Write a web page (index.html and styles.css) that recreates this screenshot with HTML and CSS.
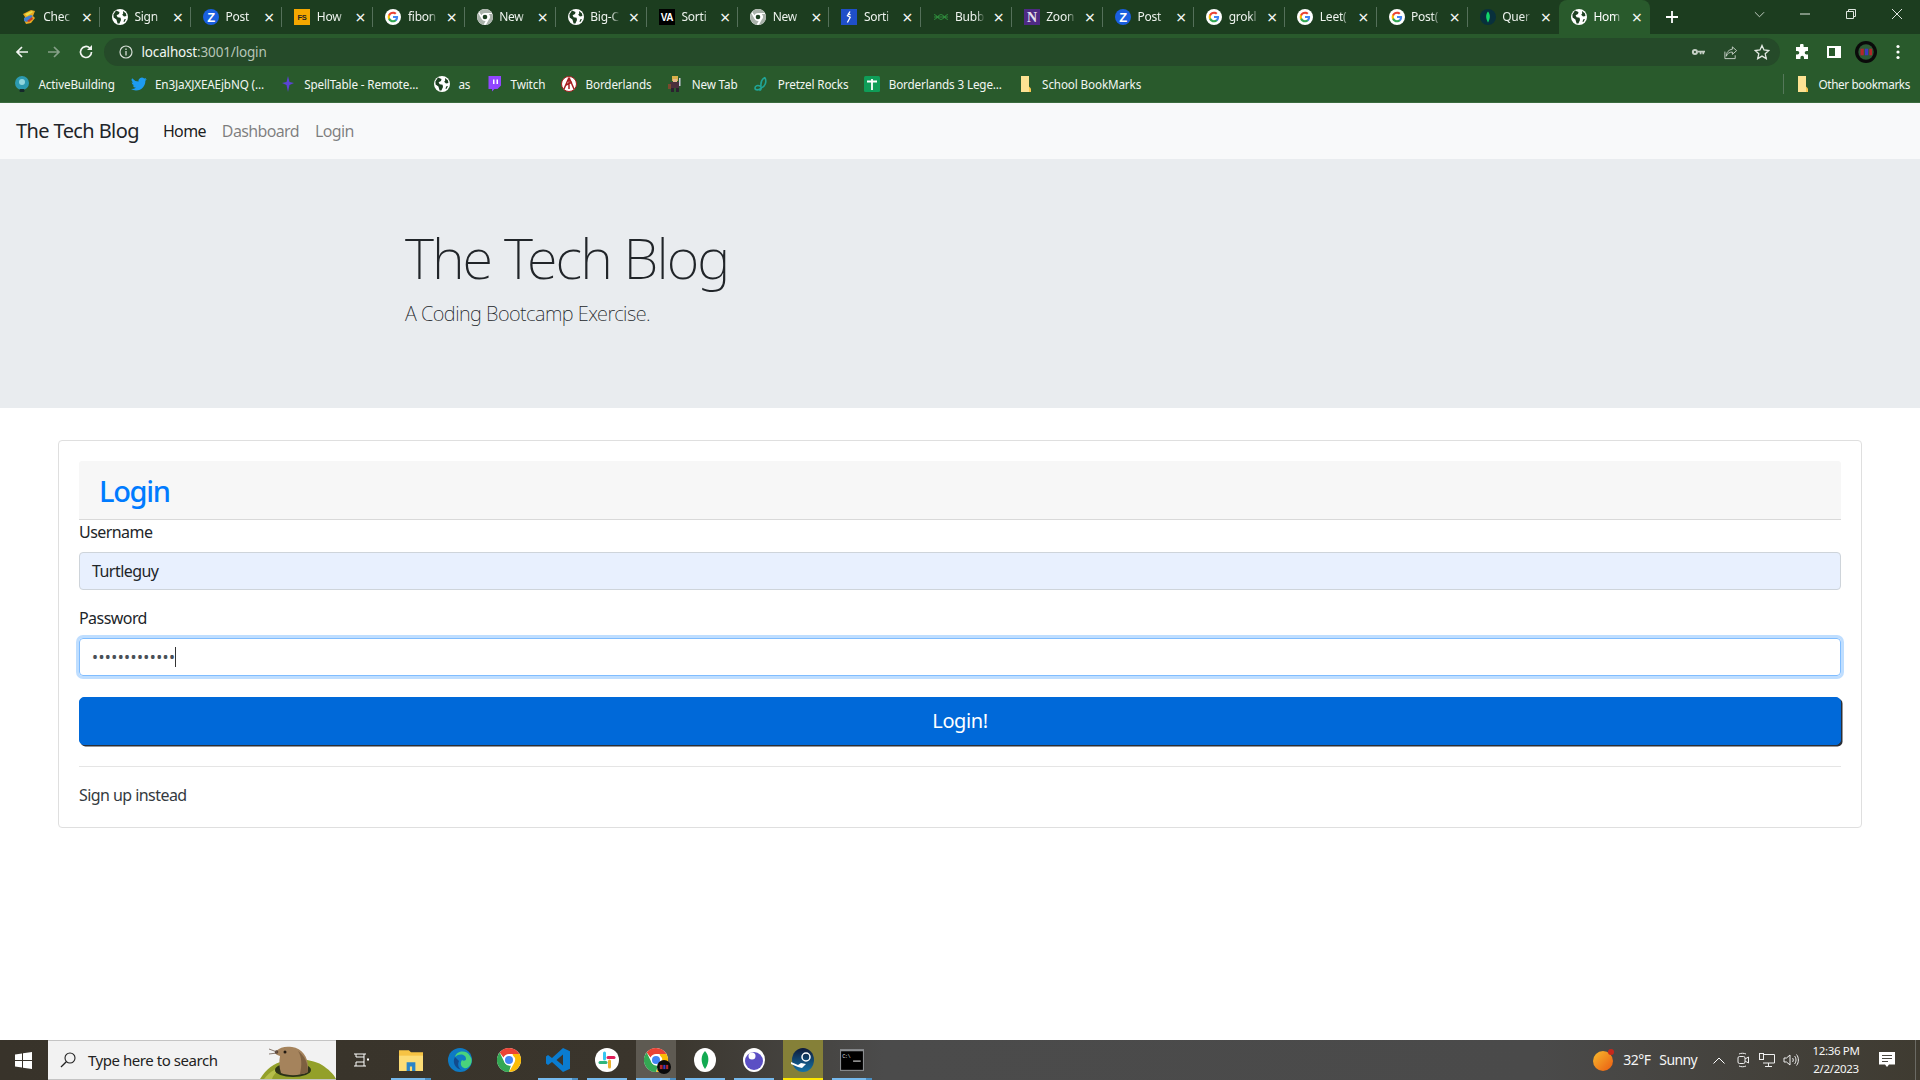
FILE: index.html
```html
<!DOCTYPE html>
<html lang="en">
<head>
<meta charset="utf-8">
<title>The Tech Blog</title>
<link rel="stylesheet" href="styles.css">
</head>
<body>
<svg class="defs" aria-hidden="true">
  <symbol id="globe" viewBox="0 0 16 16"><circle cx="8" cy="8" r="8" fill="#fff"/><path d="M4 1.600 7.500 3 7 5 4.600 6.200 5.600 8.200 8.600 8.800 9 11 7.400 14.600 5.600 14.400 4.400 10.600 1.600 8.400 1.400 5.400Z M11 2 14 4.600 14.400 7 12 7.600 10.200 5.800 11.200 4.400Z M12.600 10 14 10.200 12.400 13 11.400 12.600Z" fill="#1d3f21"/></symbol>
  <symbol id="g" viewBox="0 0 24 24"><circle cx="12" cy="12" r="12" fill="#fff"/><g transform="translate(3.3 3.3) scale(.725)"><path fill="#4285F4" d="M22.56 12.25c0-.78-.07-1.53-.2-2.25H12v4.26h5.92c-.26 1.37-1.04 2.53-2.21 3.31v2.77h3.57c2.08-1.92 3.28-4.74 3.28-8.09z"/><path fill="#34A853" d="M12 23c2.97 0 5.46-.98 7.28-2.66l-3.57-2.77c-.98.66-2.23 1.06-3.71 1.06-2.86 0-5.29-1.93-6.16-4.53H2.18v2.84C3.99 20.53 7.7 23 12 23z"/><path fill="#FBBC05" d="M5.84 14.09c-.22-.66-.35-1.36-.35-2.09s.13-1.43.35-2.09V7.07H2.18C1.43 8.55 1 10.22 1 12s.43 3.45 1.18 4.93l2.85-2.22.81-.62z"/><path fill="#EA4335" d="M12 5.38c1.62 0 3.06.56 4.21 1.64l3.15-3.15C17.45 2.09 14.97 1 12 1 7.7 1 3.99 3.47 2.18 7.07l3.66 2.84c.87-2.6 3.3-4.53 6.16-4.53z"/></g></symbol>
  <symbol id="chromegray" viewBox="0 0 16 16"><circle cx="8" cy="8" r="8" fill="#fff"/><path d="M8 0a8 8 0 0 1 7 4H8a4 4 0 0 0-3.600 2.200L2 2.800A8 8 0 0 1 8 0ZM1.200 4l3.400 6a4 4 0 0 0 4 2L6.600 15.800A8 8 0 0 1 1.200 4ZM15.400 5a8 8 0 0 1-6.600 11l3-5.500a4 4 0 0 0 0-5.500Z" fill="#aab3ab"/><circle cx="8" cy="8" r="3.300" fill="#fff"/><circle cx="8" cy="8" r="2.300" fill="#1d3f21"/></symbol>
  <symbol id="check" viewBox="0 0 16 16"><path d="M2 5 10 1l4 1-2 5 2 2-4 5-5 1-2-4 1-3Z" fill="#e9a820"/><path d="M3 9l7-3 2 1-6 6-3-1Z" fill="#3f7fd0"/><path d="M4 5l7-3 1 1-6 4Z" fill="#e8e04a"/><path d="M6 12l5-4 1 2-4 3Z" fill="#c4382c"/></symbol>
  <symbol id="blue" viewBox="0 0 16 16"><rect width="16" height="16" fill="#1f4fc9"/><path d="M9 2.500 6.400 6.800 9.200 8.200 6.400 13.500M6.800 4.600 9.600 6" stroke="#fff" stroke-width="1.300" fill="none"/></symbol>
  <symbol id="bubble" viewBox="0 0 16 16"><path d="M1 5.500c3 0 4 5 7 5s4-5 7-5M1 10.500c3 0 4-5 7-5s4 5 7 5M1 8h14" stroke="#2f8a3c" stroke-width="1.200" fill="none"/></symbol>
  <symbol id="mongotab" viewBox="0 0 16 16"><circle cx="8" cy="8" r="8" fill="#08303c"/><path d="M8 2.500c2.300 2.500 2.600 6.500 0 11-2.600-4.500-2.300-8.500 0-11Z" fill="#12d66a"/></symbol>
  <symbol id="active" viewBox="0 0 16 16"><circle cx="8" cy="7" r="7" fill="#2c9ab0"/><circle cx="8" cy="6" r="3" fill="#8fd6dd"/><rect x="5.500" y="13" width="5" height="3" rx="1" fill="#15282a"/></symbol>
  <symbol id="twitter" viewBox="0 0 24 24"><path fill="#1d9bf0" d="M23.600 4.600a9.700 9.700 0 0 1-2.800.8 4.900 4.900 0 0 0 2.100-2.700 9.800 9.800 0 0 1-3.100 1.200 4.900 4.900 0 0 0-8.400 4.500A13.900 13.900 0 0 1 1.700 3.200a4.900 4.900 0 0 0 1.500 6.600 4.900 4.900 0 0 1-2.200-.6v.1a4.900 4.900 0 0 0 3.900 4.800 4.900 4.900 0 0 1-2.200.1 4.900 4.900 0 0 0 4.600 3.400A9.900 9.900 0 0 1 0 19.600a13.900 13.900 0 0 0 7.500 2.200c9 0 14-7.500 14-14v-.6a10 10 0 0 0 2.100-2.600Z"/></symbol>
  <symbol id="spell" viewBox="0 0 16 16"><path d="M8 0 9.500 6 14 7 9.500 9 8 16 6.500 9 2 7 6.500 6Z" fill="#5b43d6"/></symbol>
  <symbol id="twitch" viewBox="0 0 16 16"><path d="M2.500 0H15v9.500L11.500 13H8.500L6 15.500V13H2.500Z" fill="#9146ff"/><path d="M7 3.500h1.500v4.500H7ZM10.500 3.500H12v4.500h-1.500Z" fill="#fff"/></symbol>
  <symbol id="bl" viewBox="0 0 16 16"><circle cx="8" cy="8" r="7.500" fill="#fff" stroke="#a81e22"/><path d="M8 1.500 3 13M8 1.500 13 13M8 1.500V13M5 9l6-3" stroke="#a81e22" stroke-width="1.500" fill="none"/></symbol>
  <symbol id="pixel" viewBox="0 0 16 16"><rect x="5" y="0" width="6" height="5" fill="#d9b04a"/><rect x="6" y="3" width="4" height="3" fill="#e6b990"/><rect x="3" y="6" width="9" height="6" fill="#4a2f3c"/><rect x="1" y="8" width="3" height="5" fill="#7a4a2e"/><rect x="12" y="2" width="1.500" height="8" fill="#ccd"/><rect x="4" y="12" width="3" height="4" fill="#2b2230"/><rect x="9" y="12" width="3" height="4" fill="#2b2230"/></symbol>
  <symbol id="pretzel" viewBox="0 0 16 16"><path d="M12 1.500C14 6 12 11 8 12 6 14.500 2 14.500 2 12s3-3 5-2c2 1 1.500 4-.5 4.500M12 1.500C9 3 7.500 6 8 10" stroke="#20a597" stroke-width="1.600" fill="none"/></symbol>
  <symbol id="sheet" viewBox="0 0 16 16"><rect width="16" height="16" rx="1.500" fill="#0f9d58"/><path d="M3 5.500h10M8 3v11" stroke="#fff" stroke-width="1.800"/></symbol>
  <symbol id="folder" viewBox="0 0 16 16"><path d="M3 0H11V14H13V16H3Z" fill="#fde293"/><path d="M11 10.500 13 12.500V16H11Z" fill="#f9c74f"/></symbol>
  <symbol id="chrome" viewBox="0 0 24 24"><circle cx="12" cy="12" r="12" fill="#fff"/><path d="M12 0a12 12 0 0 1 10.400 6H12a6 6 0 0 0-5.500 3.600L2.700 4.400A12 12 0 0 1 12 0Z" fill="#ea4335"/><path d="M22.400 6A12 12 0 0 1 12 24l5.200-9A6 6 0 0 0 16 7.500L15.500 6Z" fill="#fbbc05"/><path d="M12 24A12 12 0 0 1 2.700 4.400L7.800 15a6 6 0 0 0 6 2.700Z" fill="#34a853"/><circle cx="12" cy="12" r="5" fill="#fff"/><circle cx="12" cy="12" r="4" fill="#4285f4"/></symbol>
</svg>

<header class="chrome">
  <div class="tabstrip">
    <div class="tab"><svg class="fav"><use href="#check"/></svg><span class="tab-title">Chec</span><span class="tab-x">×</span></div>
    <div class="tab"><svg class="fav"><use href="#globe"/></svg><span class="tab-title">Sign</span><span class="tab-x">×</span></div>
    <div class="tab"><svg class="fav" viewBox="0 0 16 16"><circle cx="8" cy="8" r="8" fill="#1a5fe0"/><text x="8" y="12.500" text-anchor="middle" font-family="Liberation Sans" font-weight="700" font-size="13" fill="#fff">Z</text></svg><span class="tab-title">Post</span><span class="tab-x">×</span></div>
    <div class="tab"><svg class="fav" viewBox="0 0 16 16"><rect width="16" height="16" fill="#f5a800"/><text x="8" y="11" text-anchor="middle" font-family="Liberation Sans" font-weight="700" font-size="7.500" fill="#222">FS</text></svg><span class="tab-title">How</span><span class="tab-x">×</span></div>
    <div class="tab"><svg class="fav"><use href="#g"/></svg><span class="tab-title">fibon</span><span class="tab-x">×</span></div>
    <div class="tab"><svg class="fav"><use href="#chromegray"/></svg><span class="tab-title">New</span><span class="tab-x">×</span></div>
    <div class="tab"><svg class="fav"><use href="#globe"/></svg><span class="tab-title">Big-C</span><span class="tab-x">×</span></div>
    <div class="tab"><svg class="fav" viewBox="0 0 16 16"><rect width="16" height="16" fill="#000"/><text x="8" y="12" text-anchor="middle" font-family="Liberation Sans" font-weight="700" font-size="10" fill="#fff">VA</text></svg><span class="tab-title">Sorti</span><span class="tab-x">×</span></div>
    <div class="tab"><svg class="fav"><use href="#chromegray"/></svg><span class="tab-title">New</span><span class="tab-x">×</span></div>
    <div class="tab"><svg class="fav"><use href="#blue"/></svg><span class="tab-title">Sorti</span><span class="tab-x">×</span></div>
    <div class="tab"><svg class="fav"><use href="#bubble"/></svg><span class="tab-title">Bubb</span><span class="tab-x">×</span></div>
    <div class="tab"><svg class="fav" viewBox="0 0 16 16"><rect width="16" height="16" fill="#4e2a84"/><text x="8" y="13" text-anchor="middle" font-family="Liberation Serif" font-weight="700" font-size="14" fill="#e4e0ee">N</text></svg><span class="tab-title">Zoon</span><span class="tab-x">×</span></div>
    <div class="tab"><svg class="fav" viewBox="0 0 16 16"><circle cx="8" cy="8" r="8" fill="#1a5fe0"/><text x="8" y="12.500" text-anchor="middle" font-family="Liberation Sans" font-weight="700" font-size="13" fill="#fff">Z</text></svg><span class="tab-title">Post</span><span class="tab-x">×</span></div>
    <div class="tab"><svg class="fav"><use href="#g"/></svg><span class="tab-title">grokl</span><span class="tab-x">×</span></div>
    <div class="tab"><svg class="fav"><use href="#g"/></svg><span class="tab-title">Leet(</span><span class="tab-x">×</span></div>
    <div class="tab"><svg class="fav"><use href="#g"/></svg><span class="tab-title">Post(</span><span class="tab-x">×</span></div>
    <div class="tab tab-before-active"><svg class="fav"><use href="#mongotab"/></svg><span class="tab-title">Quer</span><span class="tab-x">×</span></div>
    <div class="tab tab-active"><svg class="fav"><use href="#globe"/></svg><span class="tab-title">Hom</span><span class="tab-x">×</span></div>
    <div class="tab-new"><svg viewBox="0 0 12 12"><path d="M6 0v12M0 6h12" stroke="#fff" stroke-width="1.800"/></svg></div>
    <div class="win-controls">
      <svg class="win-chev" viewBox="0 0 12 7"><path d="M1 1l5 5 5-5" stroke="#cfd8cf" fill="none"/></svg>
      <svg class="win-min" viewBox="0 0 10 10"><path d="M0 5h10" stroke="#dfe6df"/></svg>
      <svg class="win-max" viewBox="0 0 10 10"><path d="M.5 2.500h7v7h-7zM2.500 2.500v-2h7v7h-2" stroke="#dfe6df" fill="none"/></svg>
      <svg class="win-close" viewBox="0 0 10 10"><path d="M0 0l10 10M10 0 0 10" stroke="#dfe6df"/></svg>
    </div>
  </div>
  <div class="toolbar">
    <svg class="tb-btn" viewBox="0 0 16 16"><path d="M14 8H3M8 3 3 8l5 5" stroke="#f1f5f1" stroke-width="1.700" fill="none"/></svg>
    <svg class="tb-btn tb-fwd" viewBox="0 0 16 16"><path d="M2 8h11M8 3l5 5-5 5" stroke="#86a088" stroke-width="1.700" fill="none"/></svg>
    <svg class="tb-btn" viewBox="0 0 16 16"><path d="M13.500 8A5.500 5.500 0 1 1 11.800 4" stroke="#f1f5f1" stroke-width="1.700" fill="none"/><path d="M14 1v5H9Z" fill="#f1f5f1"/></svg>
    <div class="omnibox">
      <svg class="omni-info" viewBox="0 0 14 14"><circle cx="7" cy="7" r="6" stroke="#d5ddd5" stroke-width="1.200" fill="none"/><path d="M7 6v4.500M7 3.500v1.400" stroke="#d5ddd5" stroke-width="1.300"/></svg>
      <span class="url"><span class="url-host">localhost</span>:3001/login</span>
      <svg class="omni-key" viewBox="0 0 16 16"><circle cx="4.500" cy="8" r="3.500" fill="#c6d0c6"/><circle cx="4.500" cy="8" r="1.200" fill="#254a29"/><path d="M8 6.500h8v2h-1v2h-2v-2h-1v2h-2v-2H8Z" fill="#c6d0c6"/></svg>
      <svg class="omni-share" viewBox="0 0 16 16"><path d="M10 2l4.500 4-4.500 4V7.500C7 7.500 4.500 9 3.500 12 3.500 8 6 5 10 4.500ZM2 7v7.500h11V11" stroke="#c6d0c6" fill="none"/></svg>
      <svg class="omni-star" viewBox="0 0 16 16"><path d="M8 1.500 10 6l4.800.5L11.200 9.800 12.300 14.600 8 12.100 3.700 14.600 4.800 9.800 1.200 6.500 6 6Z" stroke="#e4eae4" stroke-width="1.300" fill="none"/></svg>
    </div>
    <div class="tb-right">
      <svg class="tb-icon" viewBox="0 0 16 16"><path d="M6 1.500a1.800 1.800 0 0 1 3.600 0V3H14v4h-1.500a1.800 1.800 0 0 0 0 3.600H14V15H10v-1.500a1.800 1.800 0 0 0-3.600 0V15H2v-4.400h1.500a1.800 1.800 0 0 0 0-3.600H2V3h4Z" fill="#fff"/></svg>
      <svg class="tb-icon" viewBox="0 0 16 16"><path d="M1 2h14v12H1Zm2 2v8h6V4Z" fill="#fff" fill-rule="evenodd"/></svg>
      <svg class="tb-avatar" viewBox="0 0 20 20"><circle cx="10" cy="10" r="10" fill="#0a0a0a"/><circle cx="10" cy="10" r="7" fill="#2d5a34"/><rect x="5" y="7" width="3" height="6" fill="#b3262a"/><rect x="9" y="7" width="3" height="6" fill="#3a3ac0"/><rect x="13" y="7" width="2.500" height="6" fill="#b3262a"/></svg>
      <svg class="tb-dots" viewBox="0 0 4 16"><circle cx="2" cy="2.500" r="1.600" fill="#fff"/><circle cx="2" cy="8" r="1.600" fill="#fff"/><circle cx="2" cy="13.500" r="1.600" fill="#fff"/></svg>
    </div>
  </div>
  <div class="bookmarks">
    <a class="bm"><svg class="fav"><use href="#active"/></svg>ActiveBuilding</a>
    <a class="bm"><svg class="fav"><use href="#twitter"/></svg>En3JaXJXEAEjbNQ (...</a>
    <a class="bm"><svg class="fav"><use href="#spell"/></svg>SpellTable - Remote...</a>
    <a class="bm"><svg class="fav"><use href="#globe"/></svg>as</a>
    <a class="bm"><svg class="fav"><use href="#twitch"/></svg>Twitch</a>
    <a class="bm"><svg class="fav"><use href="#bl"/></svg>Borderlands</a>
    <a class="bm"><svg class="fav"><use href="#pixel"/></svg>New Tab</a>
    <a class="bm"><svg class="fav"><use href="#pretzel"/></svg>Pretzel Rocks</a>
    <a class="bm"><svg class="fav"><use href="#sheet"/></svg>Borderlands 3 Lege...</a>
    <a class="bm"><svg class="fav"><use href="#folder"/></svg>School BookMarks</a>
    <span class="bm-sep"></span>
    <a class="bm bm-other"><svg class="fav"><use href="#folder"/></svg>Other bookmarks</a>
  </div>
</header>

<nav class="navbar">
  <a class="brand">The Tech Blog</a>
  <a class="nav-link nav-active">Home</a>
  <a class="nav-link">Dashboard</a>
  <a class="nav-link">Login</a>
</nav>

<section class="jumbotron">
  <div class="container">
    <h1 class="display">The Tech Blog</h1>
    <p class="lead">A Coding Bootcamp Exercise.</p>
  </div>
</section>

<main class="main">
  <div class="card">
    <h2 class="card-header">Login</h2>
    <label class="label">Username</label>
    <div class="control control-filled">Turtleguy</div>
    <label class="label">Password</label>
    <div class="control control-focus"><span class="dots">•••••••••••••</span><span class="caret"></span></div>
    <button class="btn">Login!</button>
    <hr class="rule">
    <p class="signup">Sign up instead</p>
  </div>
</main>

<footer class="taskbar">
  <svg class="start" viewBox="0 0 17 17"><path d="M0 2.400 7 1.400V8H0ZM8 1.300 17 0V8H8ZM0 9h7v6.600L0 14.600ZM8 9h9v8L8 15.700Z" fill="#fff"/></svg>
  <div class="search">
    <svg class="search-icon" viewBox="0 0 16 16"><circle cx="10" cy="6" r="5" stroke="#222" stroke-width="1.100" fill="none"/><path d="M6.300 9.700 1 15" stroke="#222" stroke-width="1.300"/></svg>
    <span class="search-text">Type here to search</span>
    <svg class="gopher" viewBox="0 0 76 40"><path d="M0 40C6 30 14 24 24 22 34 19 52 20 62 26 68 30 74 35 76 40Z" fill="#93a02a"/><path d="M4 40C10 32 18 28 28 26 20 30 14 34 12 40Z" fill="#b6bf4a"/><ellipse cx="33" cy="31" rx="18" ry="7" fill="#2c3318"/><path d="M21 34C19 28 19 22 20 17 16 16 14 14 16 12 20 8 26 7 32 8 42 9 48 18 48 28V33C40 37 28 37 21 34Z" fill="#a5835c"/><path d="M38 12C45 17 48 24 48 33 44 35 42 35 40 35 42 26 42 18 38 12Z" fill="#7d6040"/><circle cx="25" cy="13" r="1.500" fill="#221a12"/><circle cx="16.500" cy="13" r="1.800" fill="#5b4436"/><path d="M17 13 9 10M17 14 9 15" stroke="#6b5b4f" stroke-width=".8"/></svg>
  </div>
  <div class="tasks">
    <div class="task task-view"><svg viewBox="0 0 16 16"><path d="M1 2h12M3 2v3M11 2v3M1 14h12M3 14v-4h8v4M3 5h8v5" stroke="#fff" fill="none"/><rect x="14" y="6.500" width="2" height="2" fill="#fff"/></svg></div>
    <div class="task task-on task-multi"><svg class="task-wide" viewBox="0 0 22 20"><path d="M0 1h9l2 2h11v17H0Z" fill="#f6c344"/><path d="M0 6h22v14H0Z" fill="#fcdc76"/><path d="M7 20v-8h8v8h-3v-4h-2v4Z" fill="#2a84c8"/></svg></div>
    <div class="task"><svg class="task-wide" viewBox="0 0 24 24"><circle cx="12" cy="12" r="12" fill="#0e7ac4"/><path d="M22 8C19 2 9 2 7 9c4-4 11-3 11 2 0 2-3 2-4 1-3 4 0 9 5 8 5-3 6-8 3-12Z" fill="#4ad27c"/><path d="M7 9c-3 5 0 12 7 13-3-1-5-5-3-9Z" fill="#124b8d"/></svg></div>
    <div class="task"><svg class="task-wide" viewBox="0 0 24 24"><use href="#chrome"/></svg></div>
    <div class="task task-on task-multi"><svg class="task-wide" viewBox="0 0 24 24"><path d="M17 0 24 3.200V20.800L17 24 6 14 2 17 0 15.600V8.400L2 7 6 10ZM17 6.500 10.500 12 17 17.500Z" fill="#0a7cd0" fill-rule="evenodd"/></svg></div>
    <div class="task task-on"><svg class="task-wide" viewBox="0 0 24 24"><circle cx="12" cy="12" r="12" fill="#fff"/><g stroke-width="3" stroke-linecap="round"><path d="M9.500 5v6" stroke="#36c5f0"/><path d="M5 14.500h6" stroke="#2eb67d"/><path d="M14.500 19v-6" stroke="#ecb22e"/><path d="M19 9.500h-6" stroke="#e01e5a"/></g></svg></div>
    <div class="task task-on task-active task-multi"><svg class="task-wide" viewBox="0 0 24 24"><use href="#chrome"/></svg><svg class="task-badge" viewBox="0 0 20 20"><circle cx="10" cy="10" r="10" fill="#0a0a0a"/><rect x="4" y="7" width="4" height="6" fill="#b3262a"/><rect x="9" y="7" width="3" height="6" fill="#3a3ac0"/><rect x="13" y="7" width="3" height="6" fill="#b3262a"/></svg></div>
    <div class="task task-on"><svg class="task-wide" viewBox="0 0 24 24"><ellipse cx="12" cy="12" rx="11" ry="12" fill="#fff"/><path d="M12 3c4 4 5 11 0 18-5-7-4-14 0-18Z" fill="#13aa52"/></svg></div>
    <div class="task task-on"><svg class="task-wide" viewBox="0 0 24 24"><ellipse cx="12" cy="12" rx="11" ry="12" fill="#fff"/><circle cx="12" cy="13" r="9" fill="#5b4fc4"/><circle cx="10" cy="8" r="3.500" fill="#fff"/></svg></div>
    <div class="task task-alert"><svg class="task-wide" viewBox="0 0 24 24"><defs><linearGradient id="steam" x1="0" y1="0" x2="0" y2="1"><stop offset="0" stop-color="#0e1a3a"/><stop offset="1" stop-color="#1573a8"/></linearGradient></defs><ellipse cx="12" cy="12" rx="11" ry="12" fill="url(#steam)"/><circle cx="15" cy="9" r="4" fill="none" stroke="#fff" stroke-width="1.500"/><path d="M0 14l7 3 3-2 5 1-4 4-4-1-7-3Z" fill="#fff"/></svg></div>
    <div class="task task-on task-multi"><svg class="task-wide" viewBox="0 0 22 20"><rect width="22" height="20" fill="#8a8d90"/><rect x="1" y="2" width="20" height="17" fill="#000"/><text x="2" y="8" font-family="Liberation Mono" font-size="5" fill="#ddd">C:\</text><path d="M12 11h7" stroke="#ddd"/></svg></div>
  </div>
  <div class="tray">
    <svg class="weather" viewBox="0 0 22 22"><defs><linearGradient id="sun" x1="0" y1="0" x2="1" y2="1"><stop offset="0" stop-color="#f8bb2c"/><stop offset="1" stop-color="#ea5a12"/></linearGradient></defs><circle cx="10" cy="12" r="10" fill="url(#sun)"/><circle cx="18" cy="3" r="3" fill="#c5281c"/></svg>
    <span class="temp">32°F</span><span class="sunny">Sunny</span>
    <svg class="tray-chev" viewBox="0 0 12 7"><path d="M.5 6.500 6 1l5.500 5.500" stroke="#fff" stroke-width="1" fill="none"/></svg>
    <svg class="tray-meet" viewBox="0 0 12 16"><rect x="1" y="4.500" width="7" height="7" rx="1.500" stroke="#eee" fill="none"/><path d="M8 7l3.500-2v6L8 9M2 2c2-1 5-1 7 0M2 14c2 1 5 1 7 0" stroke="#eee" fill="none"/></svg>
    <svg class="tray-net" viewBox="0 0 16 14"><path d="M4.500 1.500H15.500V10H4M9.500 10v3M6 13.500h7" stroke="#eee" fill="none"/><rect x=".5" y=".5" width="4" height="6" fill="#4a4842" stroke="#eee"/></svg>
    <svg class="tray-vol" viewBox="0 0 16 14"><path d="M1 5h2.500L7 2v10L3.500 9H1ZM9.500 5c1 1 1 3 0 4M11.500 3c2 2 2 6 0 8M13.500 1.500c2.500 3 2.500 8 0 11" stroke="#eee" fill="none"/></svg>
    <div class="clock"><span>12:36 PM</span><span>2/2/2023</span></div>
    <svg class="notif" viewBox="0 0 16 16"><path d="M0 0h16v12.500H10L8 15 6 12.500H0Z" fill="#fff"/><path d="M3 3.500h10M3 6.500h10M3 9.500h6" stroke="#4a4842"/></svg>
    <span class="show-desktop"></span>
  </div>
</footer>
</body>
</html>
```

FILE: styles.css
```css
* { box-sizing: border-box; }
html, body { height: 100%; }
body {
  margin: 0;
  display: flex;
  flex-direction: column;
  height: 1080px;
  overflow: hidden;
  background: #fff;
  color: #212529;
  font-family: "Noto Sans", "Liberation Sans", sans-serif;
  font-size: 16px;
  line-height: 24px;
  letter-spacing: -0.035em;
}
.defs { position: absolute; width: 0; height: 0; }

/* browser chrome */
.chrome { flex: none; height: 103px; display: flex; flex-direction: column; background: #295a2c; }
.tabstrip { height: 34px; flex: none; display: flex; align-items: stretch; padding-left: 8.7px; background: #1c3d1f; }
.tab { width: 91.2px; flex: none; display: flex; align-items: center; padding-left: 12px; color: #eef3ee; font-size: 12px; line-height: 16px; position: relative; letter-spacing: -0.02em; }
.tab::after { content: ""; position: absolute; right: 0; top: 7px; height: 20px; width: 1px; background: #55705a; }
.tab-before-active::after, .tab-active::after { display: none; }
.tab-active { background: #295a2c; border-radius: 8px 8px 0 0; color: #fff; }
.fav { width: 16px; height: 16px; flex: none; }
.tab-title { width: 30px; margin-left: 6.5px; white-space: nowrap; overflow: hidden; -webkit-mask-image: linear-gradient(90deg, #000 70%, transparent); mask-image: linear-gradient(90deg, #000 70%, transparent); }
.tab-x { margin-left: 5.5px; width: 16px; text-align: center; font-size: 18px; color: #f4f7f4; }
.tab-new { width: 12px; margin-left: 16px; display: flex; align-items: center; }
.tab-new svg { width: 12px; height: 12px; }
.win-controls { margin-left: auto; display: flex; align-items: center; padding-right: 18px; height: 28px; }
.win-chev { width: 11px; height: 7px; margin-right: 35px; }
.win-min, .win-max, .win-close { width: 10px; height: 10px; }
.win-min { margin-right: 36px; }
.win-max { margin-right: 36px; }

.toolbar { height: 34px; flex: none; display: flex; align-items: center; padding: 2px 0 0 14px; }
.tb-btn { width: 16px; height: 16px; margin-right: 16px; flex: none; }
.omnibox { margin-left: -6px; width: 1676px; height: 28px; flex: none; border-radius: 14px; background: #254a29; display: flex; align-items: center; padding-left: 14.5px; }
.omni-info { width: 14px; height: 14px; flex: none; }
.url { margin-left: 9px; font-size: 13.5px; color: #b6c5b7; line-height: 18px; letter-spacing: -0.012em; }
.url-host { color: #f2f6f2; }
.omni-key { width: 16px; height: 14px; margin-left: auto; }
.omni-share { width: 15px; height: 15px; margin-left: 17px; }
.omni-star { width: 16px; height: 16px; margin-left: 16px; margin-right: 10px; }
.tb-right { display: flex; align-items: center; margin-left: 14px; }
.tb-icon { width: 16px; height: 16px; margin-right: 16px; }
.tb-avatar { width: 22px; height: 22px; margin-right: 19px; margin-left: -3px; }
.tb-dots { width: 4px; height: 16px; }

.bookmarks { height: 35px; flex: none; display: flex; align-items: center; padding: 0 0 3px 14px; gap: 15.9px; border-bottom: 1px solid #3b6b3e; color: #f2f6f2; font-size: 11.7px; line-height: 16px; letter-spacing: -0.012em; }
.bm { display: flex; align-items: center; gap: 8.4px; white-space: nowrap; }
.bm-sep { margin-left: auto; width: 1px; height: 20px; background: #55785a; }
.bm-other { margin-right: 10px; margin-left: -4.9px; gap: 8px; letter-spacing: -0.03em; }

/* page */
.navbar { flex: none; height: 56px; background: #f8f9fa; display: flex; align-items: center; padding: 8px 16px; }
.brand { font-size: 20px; line-height: 30px; margin-right: 16px; letter-spacing: -0.03em; }
.nav-link { padding: 8px; color: rgba(0,0,0,.5); letter-spacing: -0.04em; }
.nav-active { color: rgba(0,0,0,.9); }

.jumbotron { flex: none; background: #e9ecef; padding: 65px 0 0; height: 249px; }
.container { width: 1140px; margin: 0 auto; padding: 0 15px; }
.display { margin: 0 0 8px; font-size: 56px; line-height: 67px; font-weight: 200; letter-spacing: -0.034em; color: #212529; }
.lead { margin: 0; font-size: 20px; line-height: 30px; font-weight: 200; letter-spacing: -0.0265em; }

.main { flex: 1; padding: 32px 58px 0; }
.card { border: 1px solid #dfdfdf; border-radius: 4px; padding: 20px; height: 388px; display: flex; flex-direction: column; }
.card-header { margin: 0; height: 59px; padding: 11px 20px; background: #f7f7f7; border-bottom: 1px solid #d9d9d9; border-radius: 3px 3px 0 0; color: #007bff; font-size: 29px; line-height: 38px; font-weight: 500; letter-spacing: -0.046em; }
.label { height: 24px; margin-bottom: 8px; }
.control { height: 38px; border: 1px solid #ced4da; border-radius: 4px; padding: 6px 12px; margin-bottom: 16px; color: #495057; }
.control-filled { background: #e8f0fe; color: #212529; }
.control-focus { border-color: #80bdff; box-shadow: 0 0 0 3px rgba(0,123,255,.25); display: flex; align-items: center; }
.dots { letter-spacing: 0.4px; color: #495057; }
.caret { width: 1px; height: 20px; background: #333; }
.btn { margin-top: 5px; height: 48px; width: 100%; flex: none; border: 1px solid #0069d9; border-radius: 5px; background: #0069d9; color: #fff; font: inherit; font-size: 20px; letter-spacing: -0.02em; box-shadow: 1.5px 1.5px 0 #2b2f36; }
.rule { width: 100%; margin: 21px 0 16px; border: 0; border-top: 1px solid #e5e5e5; }
.signup { margin: 0; color: #343a40; }

/* taskbar */
.taskbar { flex: none; height: 40px; display: flex; align-items: center; color: #fff; background: linear-gradient(90deg, #38332a 0, #3a352c 34%, #4b4b4b 46%, #4a4a4a 80%, #3f3b31 100%); }
.start { width: 17px; height: 17px; margin-left: 15px; flex: none; }
.search { width: 288px; height: 40px; margin-left: 16px; flex: none; background: #f2f2f2; border: 1px solid #c4c4c4; border-width: 1px 0; display: flex; align-items: center; padding-left: 12px; position: relative; overflow: hidden; color: #222; }
.search-icon { width: 16px; height: 16px; flex: none; }
.search-text { margin-left: 12px; font-size: 15px; letter-spacing: -0.03em; }
.gopher { position: absolute; right: 0; bottom: 0; width: 76px; height: 40px; }
.tasks { display: flex; align-items: stretch; height: 40px; padding-left: 6px; gap: 9px; }
.task { width: 40px; display: flex; align-items: center; justify-content: center; position: relative; }
.task svg { width: 16px; height: 16px; }
.task svg.task-wide { width: 24px; height: 24px; }
.task-view { margin-left: -1px; margin-right: 1px; }
.task-on::after { content: ""; position: absolute; left: 0; right: 0; bottom: 0; height: 2px; background: #76b9ed; }
.task-multi::after { background: linear-gradient(90deg, #76b9ed 85%, #4a8ec2 85%); }
.task-active { background: #5e5a52; }
.task svg.task-badge { position: absolute; right: 5px; bottom: 6px; width: 14px; height: 14px; }
.task-alert { background: #858038; }
.task-alert::after { content: ""; position: absolute; left: 0; right: 0; bottom: 0; height: 2px; background: #ffe800; }
.tray { margin-left: auto; display: flex; align-items: center; height: 40px; font-size: 14px; color: #f5f5f5; }
.weather { width: 22px; height: 22px; }
.temp { margin-left: 8px; }
.sunny { margin-left: 9px; white-space: nowrap; letter-spacing: -0.045em; }
.tray-chev { width: 12px; height: 7px; margin-left: 16px; }
.tray-meet { width: 12px; height: 16px; margin-left: 12px; }
.tray-net { width: 16px; height: 14px; margin-left: 10px; }
.tray-vol { width: 16px; height: 14px; margin-left: 8px; }
.clock { margin-left: 13px; width: 48px; display: flex; flex-direction: column; align-items: center; font-size: 11.5px; line-height: 18px; letter-spacing: -0.03em; white-space: nowrap; }
.notif { width: 16px; height: 16px; margin-left: 19px; }
.show-desktop { width: 1px; height: 40px; margin-left: 20px; margin-right: 4px; background: #6b6a64; }
```
